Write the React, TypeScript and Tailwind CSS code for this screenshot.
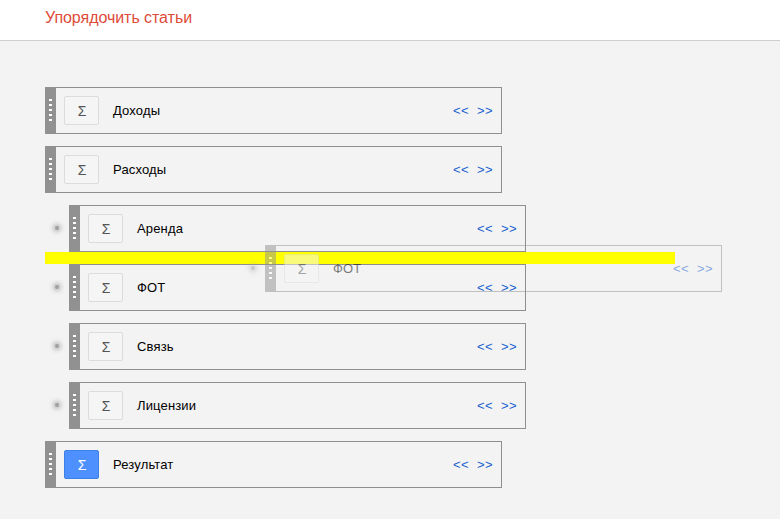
import React from 'react';

interface RowProps {
  name: string;
  child?: boolean;
  active?: boolean;
}

const rows: RowProps[] = [
  { name: 'Доходы' },
  { name: 'Расходы' },
  { name: 'Аренда', child: true },
  { name: 'ФОТ', child: true },
  { name: 'Связь', child: true },
  { name: 'Лицензии', child: true },
  { name: 'Результат', active: true },
];

const Grip = () => (
  <div className="flex w-[11px] shrink-0 flex-col items-center justify-center gap-[3px] bg-[#919191] pb-px">
    {[0, 1, 2, 3, 4].map(i => (
      <span key={i} className="h-[2px] w-[3px] bg-white" />
    ))}
  </div>
);

const Dot = () => (
  <span className="absolute top-[21px] left-[-14px] h-[4px] w-[4px] rounded-full bg-[#a0a0a0] shadow-[0_0_4px_2px_rgba(160,160,160,0.65)]" />
);

const RowBody = ({ name, active }: { name: string; active?: boolean }) => (
  <div className="flex h-[47px] w-[457px] shrink-0">
    <Grip />
    <div className="flex flex-1 items-center border border-l-0 border-[#8f8f8f]">
      <div
        className={
          active
            ? 'ml-2 flex h-[29px] w-[35px] items-center justify-center rounded-[2px] border border-[#3f7fe8] bg-[#4d90fe] pl-px text-sm text-white'
            : 'ml-2 flex h-[29px] w-[35px] items-center justify-center rounded-[2px] border border-[#dcdcdc] bg-[#f5f5f5] pl-px text-sm text-[#555555]'
        }
      >
        Σ
      </div>
      <span className="ml-[14px] flex-1 text-[13px] tracking-[0.15px] text-black">{name}</span>
      <span className="text-[13px] tracking-[0.4px] text-[#1a5fd0]">&lt;&lt;</span>
      <span className="mr-2 ml-2 text-[13px] tracking-[0.4px] text-[#1a5fd0]">&gt;&gt;</span>
    </div>
  </div>
);

const Row = ({ name, child, active }: RowProps) => (
  <div className={child ? 'relative ml-6' : 'relative'}>
    {child && <Dot />}
    <RowBody name={name} active={active} />
  </div>
);

export default function App() {
  return (
    <div className="relative h-[519px] w-[780px] overflow-hidden bg-[#f3f3f3] font-['Liberation_Sans',Arial,sans-serif]">
      <header className="flex h-[41px] items-center border-b border-[#cfcfcf] bg-white pl-[45px]">
        <h1 className="mb-[5px] text-base font-normal tracking-[-0.05px] text-[#dd4b39]">Упорядочить статьи</h1>
      </header>
      <div className="flex flex-col gap-3 pt-[46px] pl-[45px]">
        {rows.map(r => (
          <Row key={r.name} {...r} />
        ))}
      </div>
      {/* drop target marker */}
      <div className="absolute top-[252px] left-[45px] h-[12px] w-[630px] bg-[#ffff00]" />
      {/* row being dragged */}
      <div className="absolute top-[245px] left-[265px] opacity-50">
        <Dot />
        <RowBody name="ФОТ" />
      </div>
    </div>
  );
}
